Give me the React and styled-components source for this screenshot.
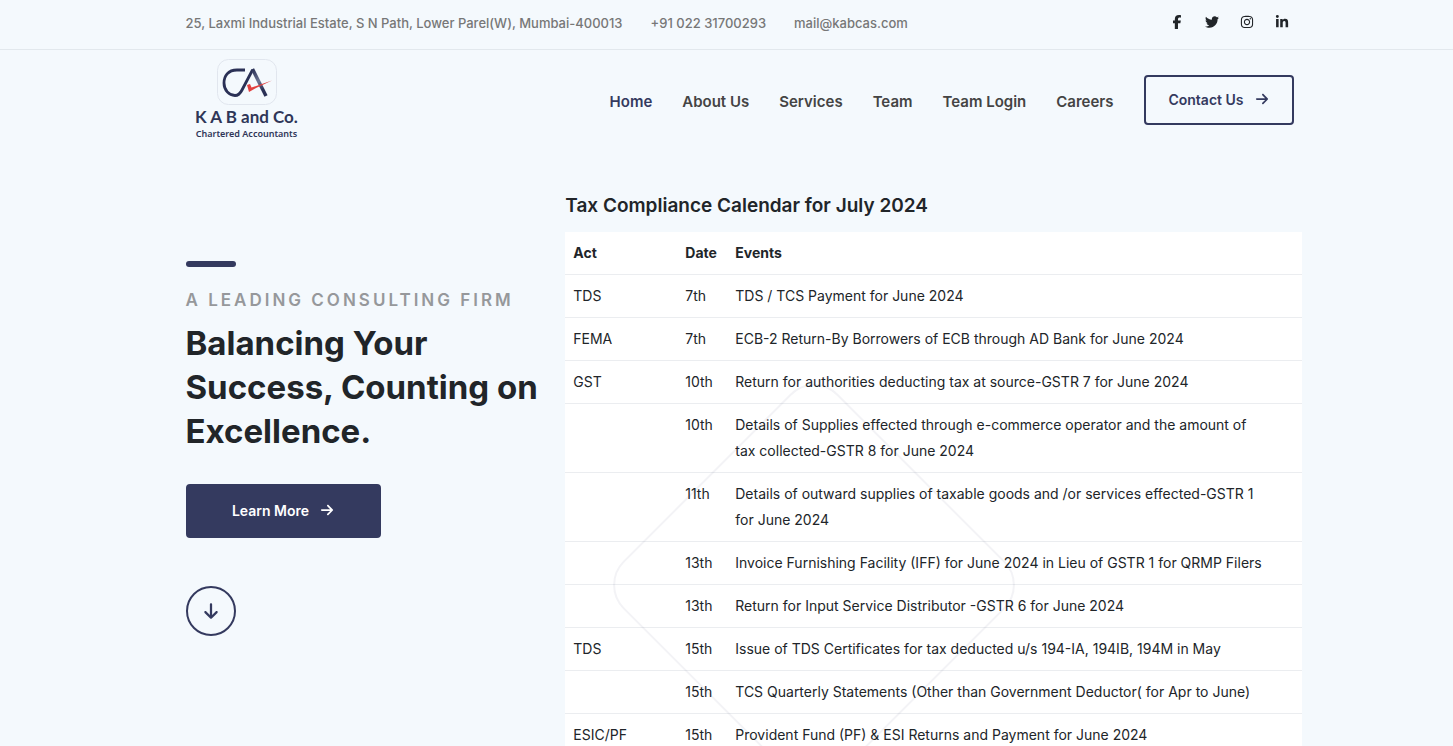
import React from "react";
import styled, { createGlobalStyle } from "styled-components";
import {
  FaFacebookF,
  FaTwitter,
  FaInstagram,
  FaLinkedinIn,
  FaArrowRight,
  FaArrowDown,
} from "react-icons/fa6";

const GlobalStyle = createGlobalStyle`
  * {
    box-sizing: border-box;
  }

  body {
    margin: 0;
    background: #f4f9fd;
    color: #212529;
    font-family: Inter, "Open Sans", sans-serif;
    font-size: 14px;
    line-height: 26px;
  }

  a {
    color: inherit;
    text-decoration: none;
  }
`;

const Container = styled.div`
  max-width: 1152px;
  margin: 0 auto;
  padding-left: 35px;
`;

const TopBar = styled.div`
  border-bottom: 1px solid #e2e8ed;
`;

const TopBarInner = styled(Container)`
  display: flex;
  align-items: center;
  justify-content: space-between;
  height: 49px;
  padding-right: 13px;
  padding-bottom: 4px;
`;

const ContactList = styled.address`
  display: flex;
  gap: 28px;
  color: #777;
  font-size: 13px;
  font-style: normal;
  font-weight: 500;
`;

const SocialList = styled.div`
  display: flex;
  gap: 20px;
  padding-bottom: 2px;
`;

const SocialLink = styled.a`
  display: flex;
  justify-content: center;
  width: 15px;
  font-size: 14px;
`;

const HeaderInner = styled(Container)`
  display: flex;
  align-items: center;
  justify-content: space-between;
  height: 100px;
  padding-right: 9px;
`;

const Logo = styled.a`
  display: flex;
  flex-direction: column;
  align-items: center;
  width: 122px;
  padding-bottom: 2px;
  color: #2f3658;
`;

const LogoName = styled.span`
  font-family: Lato, sans-serif;
  font-size: 17px;
  font-weight: 700;
  line-height: 24px;
`;

const LogoTagline = styled.span`
  font-family: "Noto Sans", sans-serif;
  font-size: 9px;
  font-weight: 600;
  line-height: 10px;
`;

const Nav = styled.nav`
  display: flex;
  align-items: center;
  gap: 30px;
`;

const NavLink = styled.a`
  padding-top: 4px;
  color: ${({ $active }) => ($active ? "#343a5f" : "#444")};
  font-size: 15px;
  font-weight: 600;
`;

const Button = styled.button`
  display: inline-flex;
  align-items: center;
  justify-content: center;
  gap: 11px;
  width: ${({ $large }) => ($large ? "195px" : "150px")};
  height: ${({ $large }) => ($large ? "54px" : "50px")};
  padding: 0 0 2px;
  border: 2px solid #343a5f;
  border-radius: 4px;
  background: ${({ $large }) => ($large ? "#343a5f" : "transparent")};
  color: ${({ $large }) => ($large ? "#fff" : "#343a5f")};
  font-family: inherit;
  font-size: 14px;
  font-weight: 600;
  cursor: pointer;
`;

const Hero = styled(Container)`
  display: grid;
  grid-template-columns: 34% 66%;
  padding-top: 42px;
`;

const Intro = styled.section`
  display: flex;
  flex-direction: column;
  align-items: flex-start;
  padding-top: 69px;
`;

const Accent = styled.span`
  width: 50px;
  height: 6px;
  border-radius: 3px;
  background: #343a5f;
`;

const Tagline = styled.p`
  margin: 20px 0 8px;
  color: #96989b;
  font-size: 17px;
  font-weight: 600;
  letter-spacing: 3px;
  text-transform: uppercase;
`;

const Title = styled.h1`
  margin: 0 0 31px;
  font-size: 33px;
  font-weight: 700;
  line-height: 44px;
`;

const ScrollLink = styled.a`
  display: flex;
  align-items: center;
  justify-content: center;
  width: 50px;
  height: 50px;
  margin-top: 48px;
  border: 2px solid #343a5f;
  border-radius: 50%;
  color: #343a5f;
  font-size: 18px;
`;

const Calendar = styled.section`
  position: relative;
`;

const CalendarTitle = styled.h2`
  margin: 0;
  padding: 1px 0 13px;
  font-size: 19px;
  font-weight: 600;
`;

const Table = styled.table`
  width: 100%;
  border-collapse: collapse;
  background: #fff;
`;

const Th = styled.th`
  width: ${({ $width }) => $width || "auto"};
  padding: 8px;
  border-bottom: 1px solid #ebedf0;
  font-weight: 700;
  text-align: left;
`;

const Td = styled.td`
  padding: 8px;
  border-bottom: 1px solid #ebedf0;
  vertical-align: top;

  &:last-child {
    padding-right: 35px;
  }
`;

// faint rotated square lying over the table
const Diamond = styled.span`
  position: absolute;
  top: 241px;
  left: 97px;
  width: 304px;
  height: 304px;
  border: 2px solid rgba(52, 58, 95, 0.06);
  border-radius: 34px;
  transform: rotate(45deg);
  pointer-events: none;
`;

const navItems = ["Home", "About Us", "Services", "Team", "Team Login", "Careers"];

const socials = [
  { label: "Facebook", Icon: FaFacebookF },
  { label: "Twitter", Icon: FaTwitter },
  { label: "Instagram", Icon: FaInstagram },
  { label: "LinkedIn", Icon: FaLinkedinIn },
];

const events = [
  { act: "TDS", date: "7th", text: "TDS / TCS Payment for June 2024" },
  { act: "FEMA", date: "7th", text: "ECB-2 Return-By Borrowers of ECB through AD Bank for June 2024" },
  { act: "GST", date: "10th", text: "Return for authorities deducting tax at source-GSTR 7 for June 2024" },
  { act: "", date: "10th", text: "Details of Supplies effected through e-commerce operator and the amount of tax collected-GSTR 8 for June 2024" },
  { act: "", date: "11th", text: "Details of outward supplies of taxable goods and /or services effected-GSTR 1 for June 2024" },
  { act: "", date: "13th", text: "Invoice Furnishing Facility (IFF) for June 2024 in Lieu of GSTR 1 for QRMP Filers" },
  { act: "", date: "13th", text: "Return for Input Service Distributor -GSTR 6 for June 2024" },
  { act: "TDS", date: "15th", text: "Issue of TDS Certificates for tax deducted u/s 194-IA, 194IB, 194M in May" },
  { act: "", date: "15th", text: "TCS Quarterly Statements (Other than Government Deductor( for Apr to June)" },
  { act: "ESIC/PF", date: "15th", text: "Provident Fund (PF) & ESI Returns and Payment for June 2024" },
];

const LogoMark = () => (
  <svg width="60" height="46" viewBox="0 0 60 46" fill="none" aria-hidden="true">
    <defs>
      <linearGradient id="leg" x1="36" y1="10" x2="50" y2="37" gradientUnits="userSpaceOnUse">
        <stop offset="0" stopColor="#2b3156" />
        <stop offset="0.45" stopColor="#6d7593" />
        <stop offset="0.75" stopColor="#2b3156" />
      </linearGradient>
    </defs>
    <rect x="0.5" y="0.5" width="59" height="45" rx="11" stroke="#e1e6ee" />
    <path
      d="M28 11H20C11 11 7 17 7 24C7 31 12 36.500 18 36.500C22 36.500 23.500 34 25 31L35.500 11"
      stroke="#2b3156"
      strokeWidth="2.800"
    />
    <path d="M35.500 10L49 37" stroke="url(#leg)" strokeWidth="3.500" />
    <path d="M30 26L33 25L34.500 28.500L55 21.500L39 29L32 33Z" fill="#e2403f" />
  </svg>
);

export default function App() {
  return (
    <>
      <GlobalStyle />
      <TopBar>
        <TopBarInner>
          <ContactList>
            <span>25, Laxmi Industrial Estate, S N Path, Lower Parel(W), Mumbai-400013</span>
            <a href="tel:+9102231700293">+91 022 31700293</a>
            <a href="mailto:mail@kabcas.com">mail@kabcas.com</a>
          </ContactList>
          <SocialList>
            {socials.map(({ label, Icon }) => (
              <SocialLink key={label} href="#" aria-label={label}>
                <Icon />
              </SocialLink>
            ))}
          </SocialList>
        </TopBarInner>
      </TopBar>

      <header>
        <HeaderInner>
          <Logo href="#">
            <LogoMark />
            <LogoName>K A B and Co.</LogoName>
            <LogoTagline>Chartered Accountants</LogoTagline>
          </Logo>
          <Nav>
            {navItems.map((item) => (
              <NavLink key={item} href="#" $active={item === "Home"}>
                {item}
              </NavLink>
            ))}
            <Button type="button">
              Contact Us <FaArrowRight />
            </Button>
          </Nav>
        </HeaderInner>
      </header>

      <Hero as="main">
        <Intro>
          <Accent />
          <Tagline>A Leading Consulting Firm</Tagline>
          <Title>
            Balancing Your
            <br />
            Success, Counting on
            <br />
            Excellence.
          </Title>
          <Button type="button" $large>
            Learn More <FaArrowRight />
          </Button>
          <ScrollLink href="#calendar" aria-label="Scroll down">
            <FaArrowDown />
          </ScrollLink>
        </Intro>

        <Calendar id="calendar">
          <CalendarTitle>Tax Compliance Calendar for July 2024</CalendarTitle>
          <Table>
            <thead>
              <tr>
                <Th $width="112px">Act</Th>
                <Th $width="50px">Date</Th>
                <Th>Events</Th>
              </tr>
            </thead>
            <tbody>
              {events.map((event, index) => (
                <tr key={index}>
                  <Td>{event.act}</Td>
                  <Td>{event.date}</Td>
                  <Td>{event.text}</Td>
                </tr>
              ))}
            </tbody>
          </Table>
          <Diamond />
        </Calendar>
      </Hero>
    </>
  );
}
